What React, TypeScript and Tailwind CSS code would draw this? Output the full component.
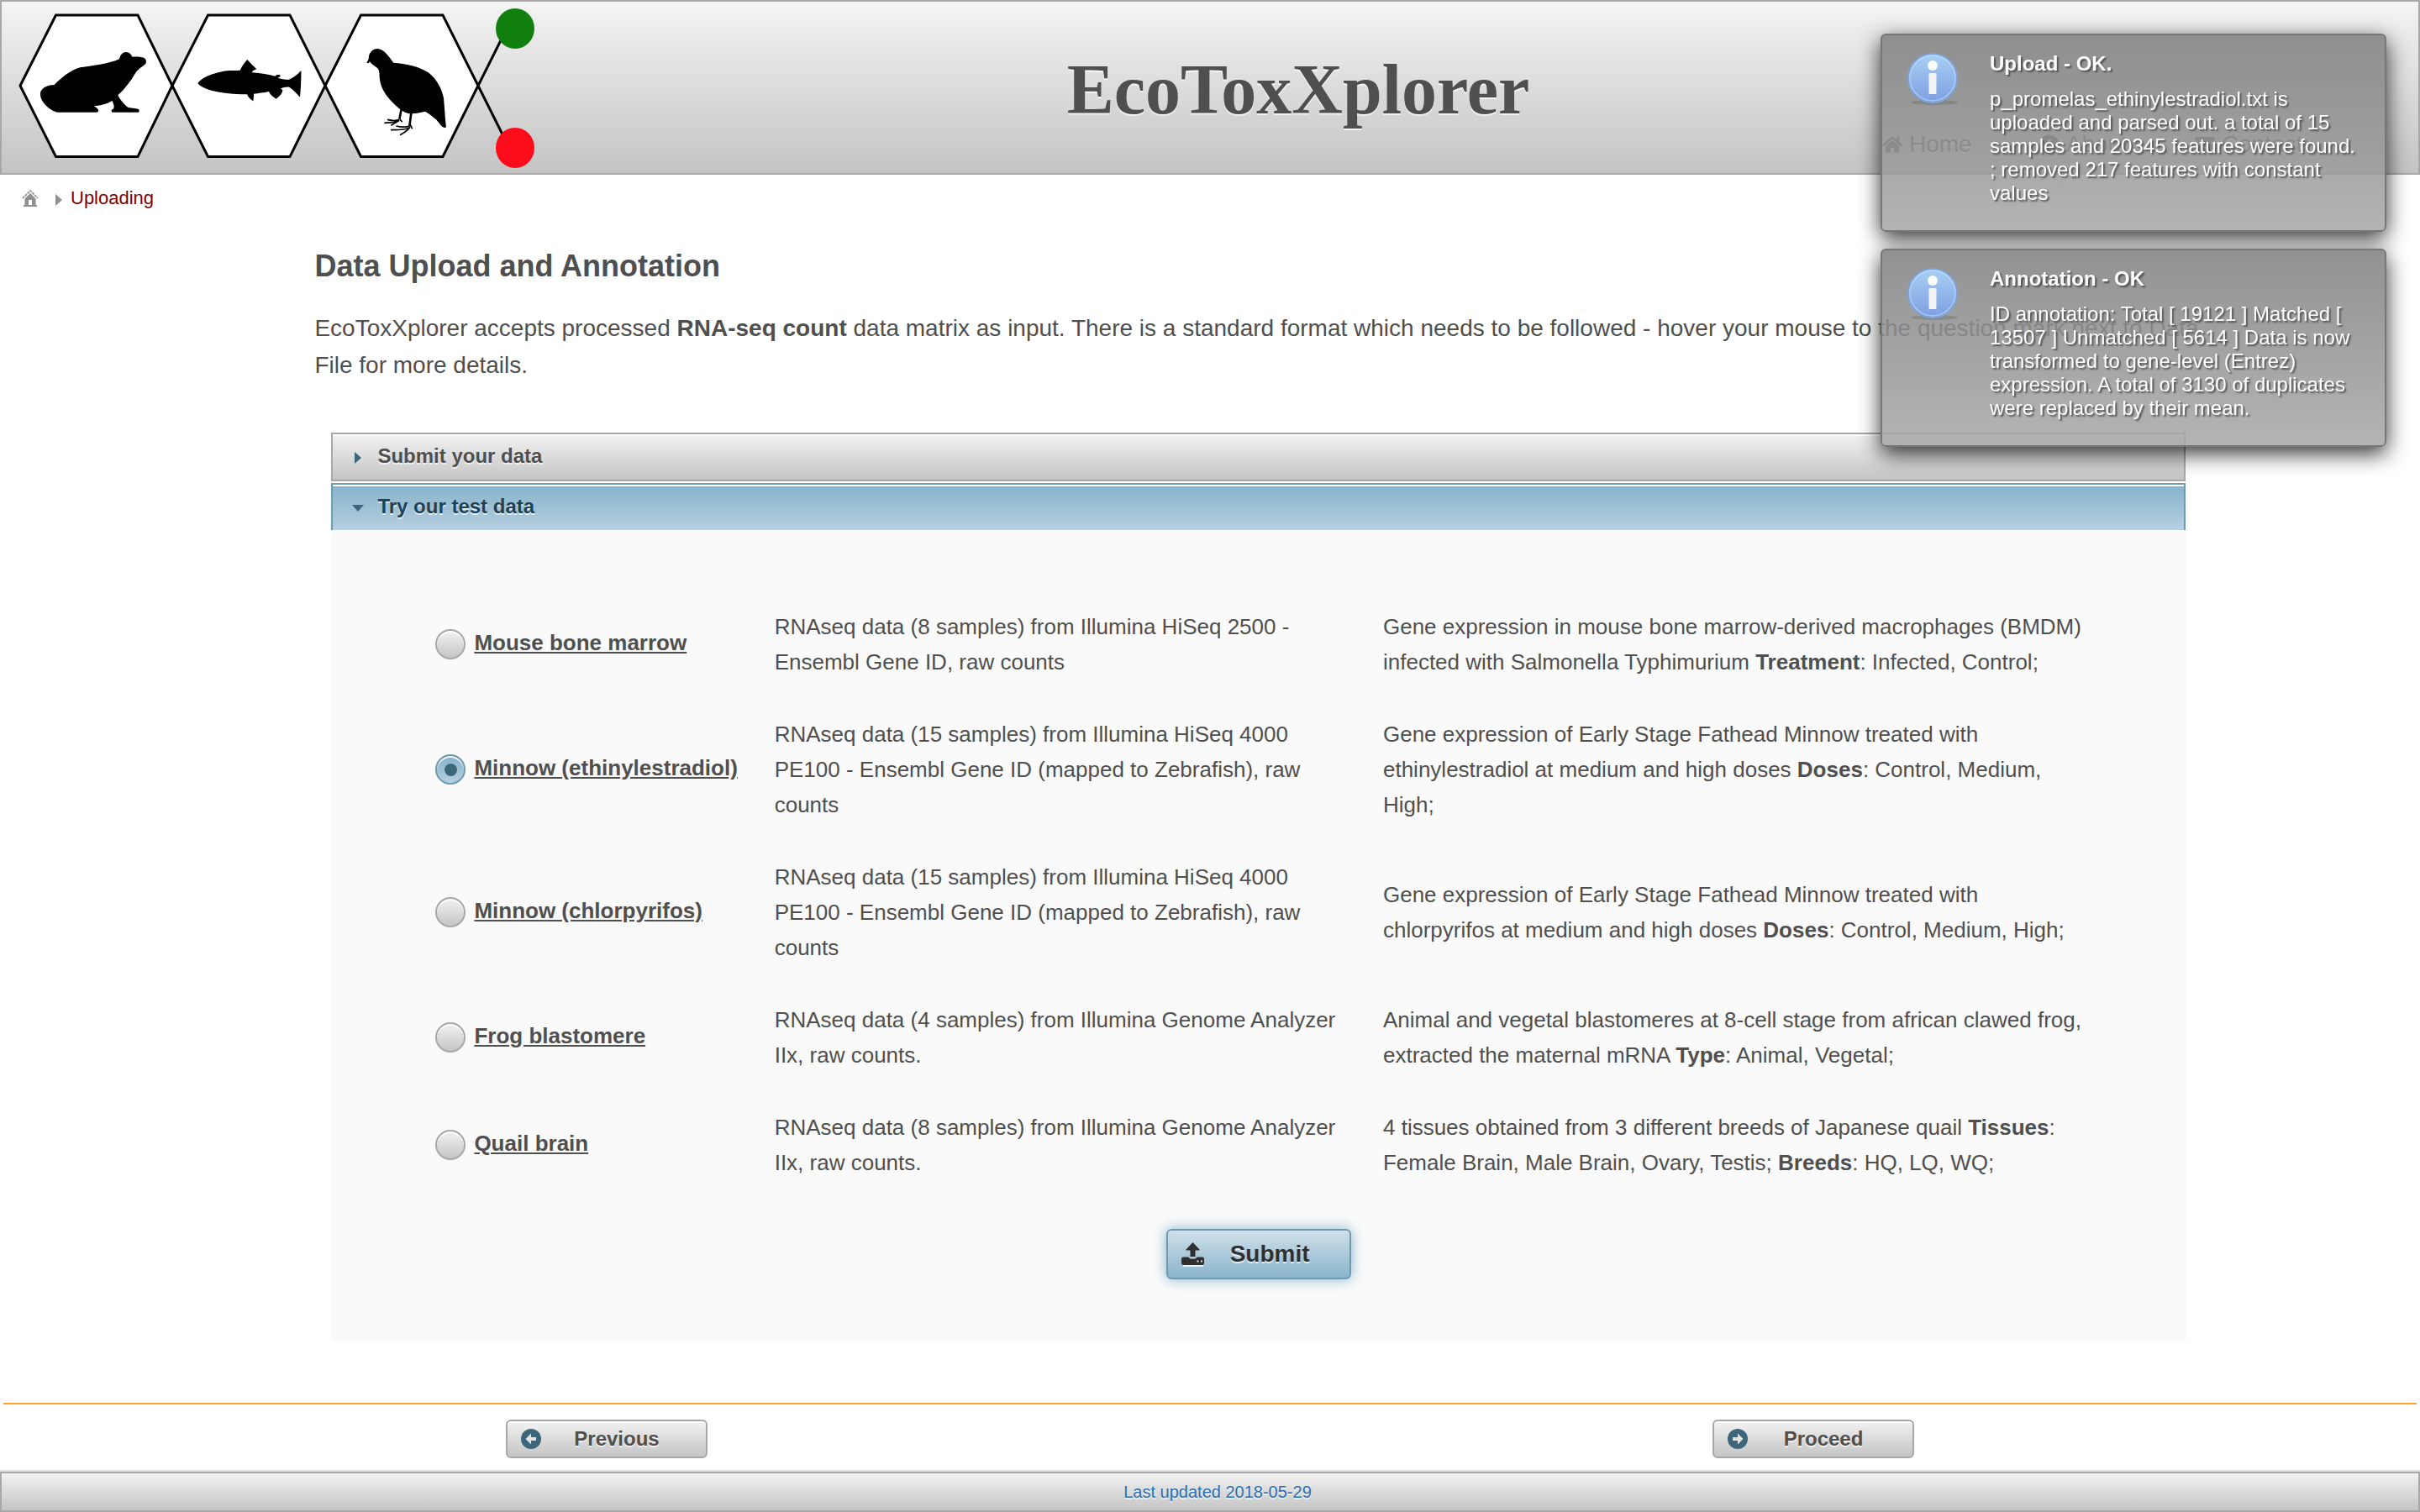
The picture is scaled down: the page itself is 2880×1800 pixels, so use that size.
import { useState, type ReactNode } from 'react';
import { FaHome, FaInfoCircle, FaEnvelope } from 'react-icons/fa';

function Logo() {
  return (
    <svg viewBox="2 2 640 204" className="block h-[204px] w-[640px]" role="img" aria-label="Frog, fish and quail">
      <g fill="#fff" stroke="#000" strokeWidth="3">
        <path d="M24 102 66.500 18H164l41 84-41 84.500H66.500Z" />
        <path d="M205 102 247.500 18H345l42 84-42 84.500H247.500Z" />
        <path d="M387 102 429.500 18H527l42 84-42 84.500H429.500Z" />
        <path d="M569 102 600 40M569 102 600 164" fill="none" />
      </g>
      <ellipse cx="613" cy="34" rx="23" ry="24" fill="#11800f" />
      <ellipse cx="613" cy="176" rx="23" ry="24" fill="#fd0d1b" />
      <g transform="translate(20 10) scale(.3333)">
        <path d="M84 303C86 285 108 274 134 273C158 248 190 222 226 211C275 205 330 197 366 181C370 165 378 156 390 156C402 157 409 164 412 173C430 172 448 173 456 178C463 184 463 192 460 198C445 210 430 220 424 230C405 262 385 288 361 310C370 328 385 345 398 354C412 357 430 357 435 360C438 364 438 369 434 371H341C336 368 337 363 341 361C351 358 347 342 340 330C320 343 295 347 274 349C284 354 292 358 291 366C291 370 288 371 284 371H144C112 362 82 330 84 303Z" />
      </g>
      <g transform="translate(210 10) scale(.3333)">
        <path d="M76 267C92 245 140 228 180 223C196 221 214 222 227 221C234 206 244 192 253 183C262 194 276 206 286 217C280 220 272 220 270 229C302 231 330 236 352 242C356 236 362 236 370 238L371 244L362 247C368 253 388 255 402 254C420 247 434 234 445 222C446 250 444 285 441 317C430 304 416 290 403 281C392 280 380 282 372 287L379 291C378 303 372 311 356 323C344 316 334 308 330 297C312 301 292 303 276 305C277 314 275 323 274 331C264 325 257 318 252 307C190 308 100 298 76 267Z" />
      </g>
      <g transform="translate(400 10) scale(.3333)">
        <path d="M109 195 116 181C116 156 132 143 150 144C172 147 187 170 205 194C250 198 300 207 333 232C362 256 378 290 384 320C387 350 389 390 393 424C388 428 382 426 374 418C360 395 340 382 318 368C300 372 285 375 270 376C250 376 240 368 228 360C195 333 165 300 158 265C152 240 158 225 148 214C138 206 127 200 120 190L116 195Z" />
        <path d="M233 360 226 396M268 374 262 420" fill="none" stroke="#000" strokeWidth="8" />
        <path d="M224 398C210 403 195 400 183 397M226 400C206 410 190 408 172 409M226 400 196 418M228 396 236 406M263 420C245 426 230 424 214 420M262 426C240 436 215 434 195 434M264 424C255 438 240 446 228 452M264 414 272 430" fill="none" stroke="#000" strokeWidth="5" />
      </g>
    </svg>
  );
}

function InfoIcon() {
  return (
    <svg viewBox="0 0 64 64" className="h-16 w-16 shrink-0" aria-hidden="true">
      <defs>
        <linearGradient id="info-fill" x1="0" y1="0" x2="0" y2="1">
          <stop offset="0" stopColor="#a9d0f5" />
          <stop offset="1" stopColor="#7d9fe0" />
        </linearGradient>
      </defs>
      <ellipse cx="34" cy="60" rx="28" ry="3" fill="#000" opacity=".12" />
      <circle cx="32" cy="31" r="29" fill="url(#info-fill)" stroke="#7ba3dc" strokeWidth="2" />
      <circle cx="32" cy="31" r="27" fill="none" stroke="#c4dffa" strokeOpacity=".6" strokeWidth="1.500" />
      <circle cx="32" cy="16" r="6" fill="#fbfbfb" />
      <rect x="27.500" y="25" width="9" height="25" rx="1" fill="#f2f2f2" />
    </svg>
  );
}

function Toast({ title, children }: { title: string; children: ReactNode }) {
  return (
    <div
      role="status"
      className="flex min-h-[236px] gap-9 rounded-md border-2 border-[#777777] bg-linear-to-b from-[#7f7f7f]/85 to-[#a7a7a7]/85 pt-5 pr-7 pl-7 text-2xl leading-7 text-white shadow-[0_8px_26px_rgba(0,0,0,0.8)] [text-shadow:2px_2px_2px_#4f4f4f]"
    >
      <InfoIcon />
      <div className="flex-1">
        <h2 className="mb-[14px] font-bold">{title}</h2>
        <p>{children}</p>
      </div>
    </div>
  );
}

function ArrowIcon({ back }: { back?: boolean }) {
  return (
    <svg viewBox="0 0 24 24" className="h-6 w-6 shrink-0" aria-hidden="true">
      <circle cx="12" cy="12" r="12" fill="#3d667b" />
      <path
        d={back ? 'M12 5.500 5.500 12l6.500 6.500V14h6v-4h-6Z' : 'M12 5.500 18.500 12 12 18.500V14H6v-4h6Z'}
        fill="#e2e2e2"
      />
    </svg>
  );
}

function NavButton({ label, back }: { label: string; back?: boolean }) {
  return (
    <button
      type="button"
      className="flex h-[46px] w-60 items-center rounded-md border-2 border-[#a8a8a8] bg-linear-to-b from-[#f2f2f2] to-[#c5c5c5] pr-4 pl-4 text-2xl leading-7 font-bold shadow-[inset_0_2px_0_#ffffff] [text-shadow:0_2px_0_rgba(255,255,255,0.7)]"
    >
      <ArrowIcon back={back} />
      <span className="flex-1 text-center">{label}</span>
    </button>
  );
}

const datasets: { id: string; name: string; data: string; description: ReactNode }[] = [
  {
    id: 'mouse',
    name: 'Mouse bone marrow',
    data: 'RNAseq data (8 samples) from Illumina HiSeq 2500 - Ensembl Gene ID, raw counts',
    description: (
      <>
        Gene expression in mouse bone marrow-derived macrophages (BMDM) infected with Salmonella Typhimurium{' '}
        <b>Treatment</b>: Infected, Control;
      </>
    ),
  },
  {
    id: 'minnow-ee2',
    name: 'Minnow (ethinylestradiol)',
    data: 'RNAseq data (15 samples) from Illumina HiSeq 4000 PE100 - Ensembl Gene ID (mapped to Zebrafish), raw counts',
    description: (
      <>
        Gene expression of Early Stage Fathead Minnow treated with ethinylestradiol at medium and high doses{' '}
        <b>Doses</b>: Control, Medium, High;
      </>
    ),
  },
  {
    id: 'minnow-cpf',
    name: 'Minnow (chlorpyrifos)',
    data: 'RNAseq data (15 samples) from Illumina HiSeq 4000 PE100 - Ensembl Gene ID (mapped to Zebrafish), raw counts',
    description: (
      <>
        Gene expression of Early Stage Fathead Minnow treated with chlorpyrifos at medium and high doses{' '}
        <b>Doses</b>: Control, Medium, High;
      </>
    ),
  },
  {
    id: 'frog',
    name: 'Frog blastomere',
    data: 'RNAseq data (4 samples) from Illumina Genome Analyzer IIx, raw counts.',
    description: (
      <>
        Animal and vegetal blastomeres at 8-cell stage from african clawed frog, extracted the maternal mRNA{' '}
        <b>Type</b>: Animal, Vegetal;
      </>
    ),
  },
  {
    id: 'quail',
    name: 'Quail brain',
    data: 'RNAseq data (8 samples) from Illumina Genome Analyzer IIx, raw counts.',
    description: (
      <>
        4 tissues obtained from 3 different breeds of Japanese quail <b>Tissues</b>: Female Brain, Male Brain, Ovary,
        Testis; <b>Breeds</b>: HQ, LQ, WQ;
      </>
    ),
  },
];

export default function App() {
  const [selected, setSelected] = useState('minnow-ee2');

  return (
    <div className="flex min-h-screen flex-col bg-white font-['Liberation_Sans',Arial,sans-serif] text-[#4f4f4f]">
      <header className="flex items-center border-2 border-[#a8a8a8] bg-linear-to-b from-[#f4f4f4] to-[#c4c4c4] [text-shadow:0_2px_0_rgba(255,255,255,0.7)]">
        <div className="w-[848px] shrink-0">
          <Logo />
        </div>
        <div className="flex-1 pt-[6px] text-center font-['Liberation_Serif','Times_New_Roman',serif] text-[84px] leading-[96px] font-bold">
          EcoToxXplorer
        </div>
        <nav className="flex w-[638px] shrink-0 gap-20 self-end pb-[18px] text-[28px] leading-8">
          <a href="#home" className="flex items-center gap-2">
            <FaHome className="h-6 w-6" />
            Home
          </a>
          <a href="#about" className="flex items-center gap-2">
            <FaInfoCircle className="h-6 w-6" />
            About
          </a>
          <a href="#contact" className="flex items-center gap-2">
            <FaEnvelope className="h-6 w-6" />
            Contact
          </a>
        </nav>
      </header>

      <nav aria-label="Breadcrumb" className="flex items-center pt-[14px] pl-[26px] text-[22px] leading-7">
        <a href="#home" aria-label="Home">
          <svg viewBox="0 0 20 20" className="h-5 w-5" aria-hidden="true">
            <path d="M1 10 10 1l9 9" fill="none" stroke="#999" strokeWidth="2" strokeDasharray="3 1" />
            <path d="M10 4 3.500 10.500V18H2v2h16v-2h-1.500v-7.500ZM8 18v-6h4v6Z" fill="#8f8f8f" fillRule="evenodd" />
          </svg>
        </a>
        <svg viewBox="0 0 8 14" className="mt-1 mr-[10px] ml-5 h-[14px] w-2" aria-hidden="true">
          <path d="M0 0 8 7 0 14Z" fill="#8f8f8f" />
        </svg>
        <a href="#uploading" className="text-[#800000]">
          Uploading
        </a>
      </nav>

      <main className="ml-[13%] w-[78%] flex-1 pt-[45px]">
        <h1 className="text-4xl leading-[44px] font-bold">Data Upload and Annotation</h1>
        <p className="mt-[30px] text-[28px] leading-[44px]">
          EcoToxXplorer accepts processed <b>RNA-seq count</b> data matrix as input. There is a standard format which
          needs to be followed - hover your mouse to the question mark next to Data File for more details.
        </p>

        <div className="mx-5 mt-[58px] mb-[70px]">
          <button
            type="button"
            aria-expanded="false"
            className="flex w-full items-center gap-[15px] border-2 border-[#a8a8a8] bg-linear-to-b from-[#f2f2f2] to-[#c5c5c5] pt-3 pb-[14px] pl-[22px] text-2xl leading-7 font-bold shadow-[inset_0_2px_0_#ffffff] [text-shadow:0_2px_0_rgba(255,255,255,0.7)]"
          >
            <svg viewBox="0 0 16 16" className="mt-1 h-4 w-4" aria-hidden="true">
              <path d="M4 1 12 8 4 15Z" fill="#3d667b" />
            </svg>
            Submit your data
          </button>
          <button
            type="button"
            aria-expanded="true"
            className="mt-0.5 flex w-full items-center gap-[15px] border-2 border-b-0 border-[#6f9ab0] bg-linear-to-b from-[#85b2cb] to-[#b6d0df] pt-3 pb-[14px] pl-[22px] text-2xl leading-7 font-bold text-[#1c4257] shadow-[inset_0_2px_0_#ffffff] [text-shadow:0_2px_0_rgba(255,255,255,0.7)]"
          >
            <svg viewBox="0 0 16 16" className="mt-1 h-4 w-4" aria-hidden="true">
              <path d="M1 4H15L8 12Z" fill="#3d667b" />
            </svg>
            Try our test data
          </button>

          <form
            onSubmit={(event) => event.preventDefault()}
            className="flex flex-col items-center bg-[#fafafa] px-[100px] pt-[72px] pb-[74px]"
          >
            <table className="w-full table-fixed text-[26px] leading-[42px]">
              <colgroup>
                <col className="w-[20.2%]" />
                <col className="w-[36.1%]" />
                <col className="w-[43.7%]" />
              </colgroup>
              <tbody>
                {datasets.map((set) => (
                  <tr key={set.id}>
                    <td className="py-[22px] pl-6">
                      <div className="flex items-center gap-[10px]">
                        <input
                          type="radio"
                          id={set.id}
                          name="dataset"
                          checked={selected === set.id}
                          onChange={() => setSelected(set.id)}
                          className="grid h-9 w-9 shrink-0 appearance-none place-items-center rounded-full border-2 border-[#a8a8a8] bg-linear-to-b from-[#f2f2f2] to-[#c5c5c5] shadow-[inset_0_2px_0_#ffffff] checked:border-[#6f9ab0] checked:from-[#85b2cb] checked:to-[#b6d0df] checked:before:h-[15px] checked:before:w-[15px] checked:before:rounded-full checked:before:bg-[#3d667b]"
                        />
                        <label htmlFor={set.id} className="pb-1 font-bold whitespace-nowrap underline">
                          {set.name}
                        </label>
                      </div>
                    </td>
                    <td className="px-[22px] py-[22px]">{set.data}</td>
                    <td className="px-[22px] py-[22px]">{set.description}</td>
                  </tr>
                ))}
              </tbody>
            </table>

            <button
              type="submit"
              className="mt-9 flex h-[60px] w-[220px] items-center rounded-md border-2 border-[#6f9ab0] bg-linear-to-b from-[#cfe0ea] to-[#8ab4cc] px-4 text-[28px] leading-8 font-bold text-[#2f2f2f] shadow-[0_0_16px_#85b2cb] [text-shadow:0_2px_0_rgba(255,255,255,0.7)]"
            >
              <svg viewBox="0 0 27 29" className="h-[29px] w-[27px] shrink-0" aria-hidden="true">
                <path d="M1.500 19H26.500V26.500Q26.500 29 24.500 29H3.500Q1.500 29 1.500 27Z" fill="#e8f0f5" />
                <path
                  d="M13.500 0 21.500 8.500V9.500H16.500V17H10.500V9.500H5.500V8.500Z M2 17.500H8.500Q9.500 19.500 11 19.500H16Q17.500 19.500 18.500 17.500H25Q27 17.500 27 19.500V24.500Q27 27 25 27H2Q0 27 0 24.500V19.500Q0 17.500 2 17.500Z"
                  fill="#2f2f2f"
                />
                <path d="M18.500 21.500h2v2h-2zM23 21.500h2v2h-2z" fill="#dfe9ef" />
              </svg>
              <span className="flex-1 text-center">Submit</span>
            </button>
          </form>
        </div>
      </main>

      <div className="mx-1 grid grid-cols-2 justify-items-center border-t-2 border-[#fda428] pt-[18px] pb-[14px]">
        <NavButton label="Previous" back />
        <NavButton label="Proceed" />
      </div>

      <footer className="border-t-2 border-[#dcdce8]">
        <div className="border-2 border-[#a8a8a8] bg-linear-to-b from-[#f2f2f2] to-[#c5c5c5] py-2 pl-[18px] text-center text-xl leading-7 text-[#2a6eb5] [text-shadow:0_2px_0_rgba(255,255,255,0.7)]">
          Last updated 2018-05-29
        </div>
      </footer>

      <div className="fixed top-10 right-10 flex w-[602px] flex-col gap-5">
        <Toast title="Upload - OK.">
          p_promelas_ethinylestradiol.txt is uploaded and parsed out. a total of 15 samples and 20345 features were
          found. ; removed 217 features with constant values
        </Toast>
        <Toast title="Annotation - OK">
          ID annotation: Total [ 19121 ] Matched [ 13507 ] Unmatched [ 5614 ] Data is now transformed to gene-level
          (Entrez) expression. A total of 3130 of duplicates were replaced by their mean.
        </Toast>
      </div>
    </div>
  );
}
